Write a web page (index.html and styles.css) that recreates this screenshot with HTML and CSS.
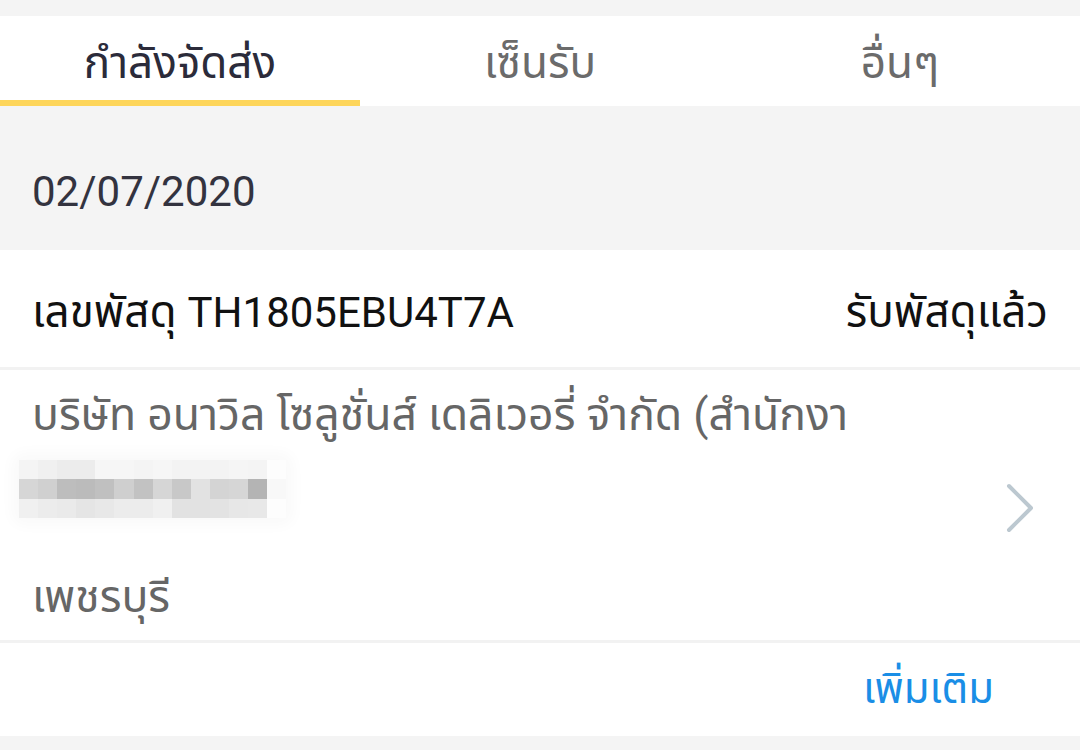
FILE: index.html
```html
<!DOCTYPE html>
<html lang="th">
<head>
<meta charset="utf-8">
<link rel="stylesheet" href="styles.css">
</head>
<body>
<div class="page">
  <nav class="tabs">
    <div class="tab active">กำลังจัดส่ง</div>
    <div class="tab">เซ็นรับ</div>
    <div class="tab">อื่นๆ</div>
  </nav>
  <div class="date">02/07/2020</div>
  <section class="card">
    <div class="track-row">
      <span class="track-no">เลขพัสดุ <span class="code">TH1805EBU4T7A</span></span>
      <span class="status">รับพัสดุแล้ว</span>
    </div>
    <div class="addr-row">
      <div class="addr">
        <div class="addr-line">บริษัท อนาวิล โซลูชั่นส์ เดลิเวอรี่ จำกัด (สำนักงา</div>
        <div class="blur">
          <i style="background:#f4f4f4"></i><i style="background:#f0f0f0"></i><i style="background:#ececec"></i><i style="background:#ececec"></i><i style="background:#f6f6f6"></i><i style="background:#f6f6f6"></i><i style="background:#f4f4f4"></i><i style="background:#f6f6f6"></i><i style="background:#f3f3f3"></i><i style="background:#f3f3f3"></i><i style="background:#f3f3f3"></i><i style="background:#f5f5f5"></i><i style="background:#f4f4f4"></i><i style="background:#fdfdfd"></i>
          <i style="background:#d6d6d6"></i><i style="background:#d0d0d0"></i><i style="background:#bdbdbd"></i><i style="background:#bbbbbb"></i><i style="background:#c0c0c0"></i><i style="background:#cfcfcf"></i><i style="background:#c2c2c2"></i><i style="background:#d6d6d6"></i><i style="background:#c8c8c8"></i><i style="background:#e2e2e2"></i><i style="background:#d4d4d4"></i><i style="background:#d6d6d6"></i><i style="background:#b4b4b4"></i><i style="background:#f8f8f8"></i>
          <i style="background:#f0f0f0"></i><i style="background:#ececec"></i><i style="background:#eaeaea"></i><i style="background:#e5e5e5"></i><i style="background:#e8e8e8"></i><i style="background:#ececec"></i><i style="background:#ececec"></i><i style="background:#f0f0f0"></i><i style="background:#e2e2e2"></i><i style="background:#e2e2e2"></i><i style="background:#e3e3e3"></i><i style="background:#e7e7e7"></i><i style="background:#e8e8e8"></i><i style="background:#fdfdfd"></i>
        </div>
        <div class="addr-line city">เพชรบุรี</div>
      </div>
      <svg class="chev" width="32" height="52" viewBox="0 0 32 52" aria-hidden="true">
        <path d="M5 4 L27 26 L5 48" fill="none" stroke="#bcc8d0" stroke-width="4" stroke-linecap="round" stroke-linejoin="round"/>
      </svg>
    </div>
    <div class="more-row">
      <span class="more">เพิ่มเติม</span>
    </div>
  </section>
</div>
</body>
</html>
```

FILE: styles.css
```css
html, body {
  margin: 0;
  padding: 0;
}
body {
  background: #f4f4f4;
  font-family: Roboto, "Noto Sans Thai", "Noto Sans", "DejaVu Sans", sans-serif;
  width: 1080px;
  height: 750px;
  overflow: hidden;
}
.page {
  padding-top: 16px;
}
.tabs {
  display: flex;
  background: #ffffff;
  height: 90px;
}
.tab {
  flex: 1;
  position: relative;
  display: flex;
  align-items: center;
  justify-content: center;
  font-size: 44px;
  color: #6b6b6b;
  padding-top: 6px;
}
.tab.active {
  color: #2b2b3a;
}
.tab.active::after {
  content: "";
  position: absolute;
  left: 0;
  bottom: 0;
  width: 100%;
  height: 6px;
  background: #fdd55a;
}
.date {
  height: 144px;
  box-sizing: border-box;
  padding: 62px 0 0 32px;
  font-size: 42px;
  line-height: 48px;
  color: #33333f;
}
.card {
  background: #ffffff;
}
.track-row {
  display: flex;
  justify-content: space-between;
  align-items: center;
  height: 120px;
  padding: 9px 32px 0 32px;
  box-sizing: border-box;
  border-bottom: 3px solid #f2f2f2;
  font-size: 44px;
  color: #111111;
}
.code {
  font-size: 42px;
}
.addr-row {
  display: flex;
  align-items: flex-start;
  justify-content: space-between;
  height: 273px;
  box-sizing: border-box;
  border-bottom: 3px solid #f2f2f2;
  padding: 0 46px 0 32px;
}
.addr {
  display: flex;
  flex-direction: column;
  padding-top: 19px;
}
.addr-line {
  font-size: 44.5px;
  line-height: 52px;
  color: #666666;
}
.blur {
  display: grid;
  grid-template-columns: repeat(14, 19.1px);
  grid-auto-rows: 19.4px;
  width: max-content;
  margin: 19px 0 0 -13px;
  box-shadow: 0 0 14px 8px rgba(0, 0, 0, 0.025);
  border-radius: 6px;
}
.blur i {
  display: block;
}
.city {
  margin-top: 53px;
}
.chev {
  display: block;
  margin-top: 112px;
  margin-right: -2px;
}
.more-row {
  display: flex;
  justify-content: flex-end;
  align-items: center;
  height: 93px;
  padding-right: 86px;
}
.more {
  font-size: 42px;
  color: #1a8ee6;
}
```
